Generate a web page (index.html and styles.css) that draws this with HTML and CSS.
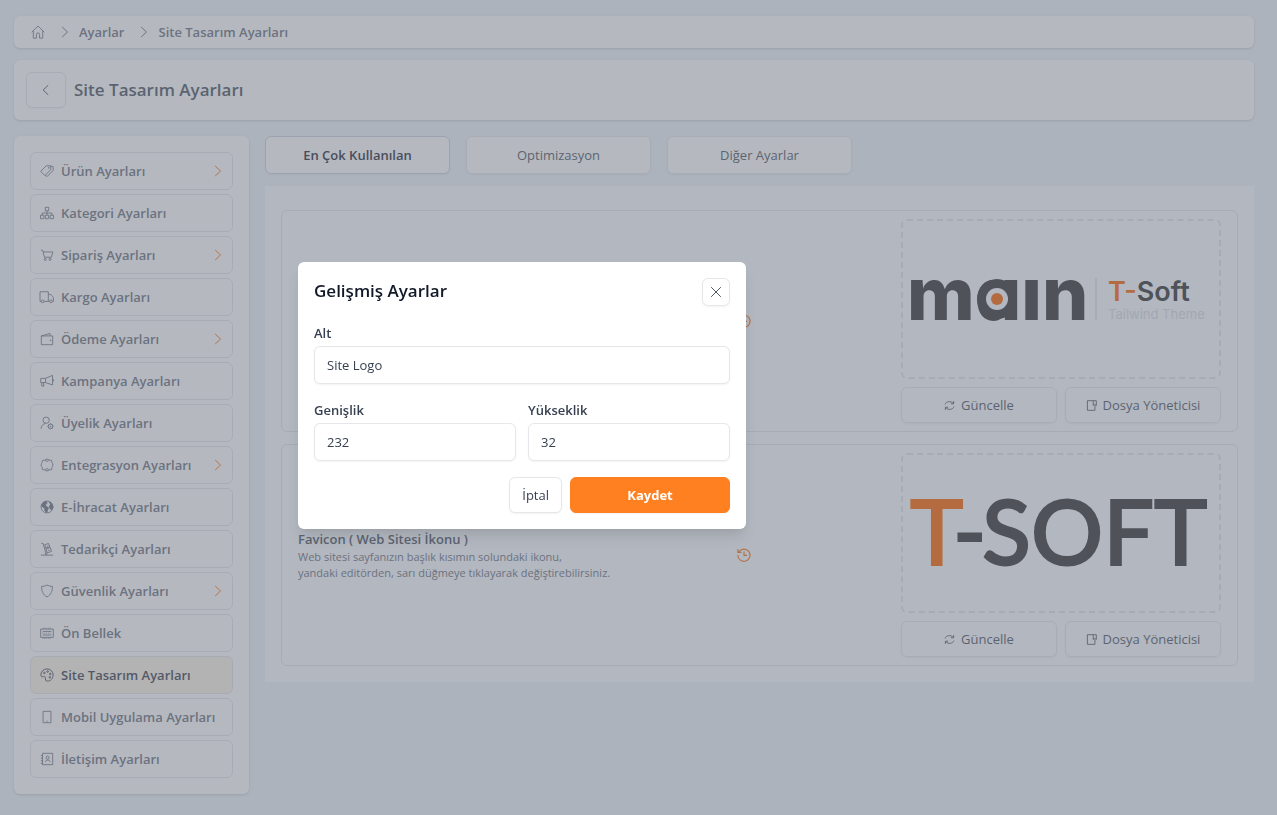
FILE: index.html
```html
<!DOCTYPE html>
<html lang="tr">
<head>
	<meta charset="utf-8">
	<meta name="viewport" content="width=device-width, initial-scale=1">
	<title>Site Tasarım Ayarları</title>
	<link rel="stylesheet" href="styles.css">
</head>
<body>

<!-- icon sprite -->
<svg class="sprite" aria-hidden="true">
	<symbol id="i-home" viewBox="0 0 16 16"><path d="M.8 8.2 8 1.2l7.2 7M2.6 6.8V15h3.6v-4.2a1.8 1.8 0 0 1 3.6 0V15h3.6V6.8"/></symbol>
	<symbol id="i-right" viewBox="0 0 10 14"><path d="M2.2 2l5.300 5-5.300 5"/></symbol>
	<symbol id="i-left" viewBox="0 0 10 14"><path d="M7.200 2.200l-5 4.800 5 4.800"/></symbol>
	<symbol id="i-close" viewBox="0 0 16 16"><path d="M2.500 2.500l11 11M13.500 2.500l-11 11"/></symbol>
	<symbol id="i-tags" viewBox="0 0 16 16"><path d="M.8 8.400 7.200 2h5v4.600L5.600 13.200zM12.200 2.400l2.800.6v4.400l-7 7-2-1.600"/><circle cx="10" cy="4.400" r=".5"/></symbol>
	<symbol id="i-tree" viewBox="0 0 16 16"><path d="M6 1.500h4v4H6zM.6 10.500h3.800v4H.6zM6.100 10.500h3.800v4H6.100zM11.600 10.500h3.800v4h-3.800zM8 5.500v5M2.500 10.500V8h11v2.500"/></symbol>
	<symbol id="i-cart" viewBox="0 0 16 16"><path d="M1 2.500h2l2 8h8l1.700-6H3.500"/><circle cx="6" cy="13" r="1.200"/><circle cx="11.500" cy="13" r="1.200"/></symbol>
	<symbol id="i-truck" viewBox="0 0 16 16"><path d="M1.500 13H0V2h9.500v11H4.600M9.500 5h2.800l3 3.500V13H14M9.500 13h1.400"/><circle cx="3" cy="13" r="1.600"/><circle cx="12.500" cy="13" r="1.600"/></symbol>
	<symbol id="i-wallet" viewBox="0 0 16 16"><path d="M1.500 4.500h13v10h-13zM1.500 4.500l10-2.800v2.800"/><circle cx="12" cy="9.500" r=".5"/></symbol>
	<symbol id="i-horn" viewBox="0 0 16 16"><path d="M.8 5h5.500l8-3.500v11L6.300 9.800H.8zM6.300 5v4.800M15.400 6v2.500M2 9.800v4h2.500l-.5-4"/></symbol>
	<symbol id="i-user" viewBox="0 0 16 16"><circle cx="7" cy="4.800" r="3.600"/><path d="M1.200 14.500c.3-3.300 2-5.200 5-6"/><circle cx="12" cy="11.800" r="2.600"/><circle cx="12" cy="11.800" r=".5"/><path d="M12 8.200v1M12 14.400v1M8.400 11.800h1M14.600 11.800h1M9.500 9.300l.7.7M13.800 13.600l.7.7M14.500 9.300l-.7.7M10.200 13.600l-.7.7"/></symbol>
	<symbol id="i-puzzle" viewBox="0 0 16 16"><path d="M5.500 2.500H3.500a1 1 0 0 0-1 1v2C.8 5.800.8 10.200 2.500 10.500v2a1 1 0 0 0 1 1h2c.3 1.700 4.700 1.700 5 0h2a1 1 0 0 0 1-1v-2c1.700-.3 1.700-4.700 0-5v-2a1 1 0 0 0-1-1h-2C10.200.8 5.800.8 5.500 2.500z"/><path d="M5.500 2.500l1 1h3l1-1M5.500 13.500l1-1h3l1 1"/></symbol>
	<symbol id="i-globe" viewBox="0 0 16 16"><circle cx="8" cy="8" r="6.800"/><path class="fill" d="M1.500 6 4 2.500 7.500 1.500 8 4 6 5.500l1 2 2.500 1L9 11l-1.500 3.500L5.500 12V9.500L3 8zM10.500 2l3 2 1.400 4-1.500 3-2-1-.6-3 1.200-2z"/></symbol>
	<symbol id="i-dolly" viewBox="0 0 16 16"><path d="M1.500 1.500h2l3.200 11.200M5.400 3l4.500-1.300 1.100 4-4.500 1.200zM6.800 7.700l5-1.400 1.300 4.600-5 1.400zM1 15h14M8 4.800l1.500-.4M9 9.800l2-.6"/><circle cx="7" cy="13.500" r="1"/></symbol>
	<symbol id="i-shield" viewBox="0 0 16 16"><path d="M8 1.200c2 1.100 4 1.600 6.200 1.600 0 5.400-1.500 9.400-6.200 12-4.700-2.600-6.200-6.600-6.200-12C4 2.800 6 2.300 8 1.200z"/></symbol>
	<symbol id="i-memory" viewBox="0 0 16 16"><path d="M.8 3.500h14.400v9.500H.8zM3 6.200h10M3 10.300h10"/><path d="M3 8.200h10M3 2.500h10M3 14h10" stroke-dasharray="1 1"/></symbol>
	<symbol id="i-palette" viewBox="0 0 16 16"><path d="M8 1a7 7 0 0 1 7 7c0 3.800-2.800 7-6.500 7-2.600 0-2.300-2.300-2.200-3.500.1-1.500-.9-2-2.200-1.600C2.300 10.500 1 9.900 1 8a7 7 0 0 1 7-7z"/><circle cx="5" cy="5.600" r=".9"/><circle cx="8.700" cy="4" r=".9"/><circle cx="11.700" cy="6.800" r=".9"/><circle cx="11.200" cy="10.600" r=".9"/></symbol>
	<symbol id="i-mobile" viewBox="0 0 16 16"><path d="M3.500 1.500h9v13h-9zM7.300 12.800h1.400"/></symbol>
	<symbol id="i-contact" viewBox="0 0 16 16"><path d="M2.800 1.500h11.700v13H2.800zM1 4h2.500M1 7h2.500M1 10h2.500M1 13h2.500M6 11.500c0-3 5.500-3 5.500 0"/><circle cx="8.700" cy="6.500" r="1.700"/></symbol>
	<symbol id="i-refresh" viewBox="0 0 16 16"><path d="M1.500 6.500C3 1.800 10 .8 13.500 5M14.500 9.500C13 14.200 6 15.200 2.500 11M14 1.500v4h-4M2 14.500v-4h4"/></symbol>
	<symbol id="i-file" viewBox="0 0 16 16"><path d="M10.500 1H2v14h11V8M10.500 1H15v7l-2.200-1.600L10.500 8z"/></symbol>
	<symbol id="i-history" viewBox="0 0 16 16"><path d="M2 4.600A7 7 0 1 1 1 8M1 1v4h4M8 4v4.500h3.500"/></symbol>
</svg>

<div class="page">
	<nav class="breadcrumb card" aria-label="Konum">
		<a href="#" aria-label="Ana sayfa"><svg class="icon"><use href="#i-home"/></svg></a>
		<svg class="icon sep"><use href="#i-right"/></svg>
		<a href="#">Ayarlar</a>
		<svg class="icon sep"><use href="#i-right"/></svg>
		<a href="#">Site Tasarım Ayarları</a>
	</nav>

	<header class="title-bar card">
		<button class="btn back" type="button" aria-label="Geri"><svg class="icon"><use href="#i-left"/></svg></button>
		<h1>Site Tasarım Ayarları</h1>
	</header>

	<div class="columns">
		<aside class="sidebar card">
			<a href="#"><svg class="icon"><use href="#i-tags"/></svg>Ürün Ayarları<svg class="icon more"><use href="#i-right"/></svg></a>
			<a href="#"><svg class="icon"><use href="#i-tree"/></svg>Kategori Ayarları</a>
			<a href="#"><svg class="icon"><use href="#i-cart"/></svg>Sipariş Ayarları<svg class="icon more"><use href="#i-right"/></svg></a>
			<a href="#"><svg class="icon"><use href="#i-truck"/></svg>Kargo Ayarları</a>
			<a href="#"><svg class="icon"><use href="#i-wallet"/></svg>Ödeme Ayarları<svg class="icon more"><use href="#i-right"/></svg></a>
			<a href="#"><svg class="icon"><use href="#i-horn"/></svg>Kampanya Ayarları</a>
			<a href="#"><svg class="icon"><use href="#i-user"/></svg>Üyelik Ayarları</a>
			<a href="#"><svg class="icon"><use href="#i-puzzle"/></svg>Entegrasyon Ayarları<svg class="icon more"><use href="#i-right"/></svg></a>
			<a href="#"><svg class="icon"><use href="#i-globe"/></svg>E-İhracat Ayarları</a>
			<a href="#"><svg class="icon"><use href="#i-dolly"/></svg>Tedarikçi Ayarları</a>
			<a href="#"><svg class="icon"><use href="#i-shield"/></svg>Güvenlik Ayarları<svg class="icon more"><use href="#i-right"/></svg></a>
			<a href="#"><svg class="icon"><use href="#i-memory"/></svg>Ön Bellek</a>
			<a href="#" class="active"><svg class="icon"><use href="#i-palette"/></svg>Site Tasarım Ayarları</a>
			<a href="#"><svg class="icon"><use href="#i-mobile"/></svg>Mobil Uygulama Ayarları</a>
			<a href="#"><svg class="icon"><use href="#i-contact"/></svg>İletişim Ayarları</a>
		</aside>

		<main>
			<div class="tabs">
				<button class="btn active" type="button">En Çok Kullanılan</button>
				<button class="btn" type="button">Optimizasyon</button>
				<button class="btn" type="button">Diğer Ayarlar</button>
			</div>

			<div class="panel">
				<section class="setting">
					<div class="info"></div>
					<button class="history" type="button" aria-label="Geçmiş"><svg class="icon"><use href="#i-history"/></svg></button>
					<div class="media">
						<div class="preview">
							<svg class="logo" viewBox="0 0 300 66" role="img" aria-label="main T-Soft Tailwind Theme">
								<text class="logo-main" x="-4" y="54">mɑın</text>
								<circle cx="86" cy="33" r="20"/>
								<circle class="logo-hole" cx="86" cy="33" r="11"/>
								<circle class="logo-dot" cx="86" cy="33" r="6"/>
								<path class="logo-rule" d="M185 12v42"/>
								<text class="logo-name" x="197" y="35"><tspan class="accent">T-</tspan>Soft</text>
								<text class="logo-sub" x="197" y="53">Tailwind Theme</text>
							</svg>
						</div>
						<div class="actions">
							<button class="btn" type="button"><svg class="icon"><use href="#i-refresh"/></svg>Güncelle</button>
							<button class="btn" type="button"><svg class="icon"><use href="#i-file"/></svg>Dosya Yöneticisi</button>
						</div>
					</div>
				</section>

				<section class="setting">
					<div class="info">
						<h2>Favicon ( Web Sitesi İkonu )</h2>
						<p>Web sitesi sayfanızın başlık kısımın solundaki ikonu,<br>yandaki editörden, sarı düğmeye tıklayarak değiştirebilirsiniz.</p>
					</div>
					<button class="history" type="button" aria-label="Geçmiş"><svg class="icon"><use href="#i-history"/></svg></button>
					<div class="media">
						<div class="preview">
							<svg class="logo" viewBox="0 0 300 66" role="img" aria-label="T-SOFT">
								<text class="logo-soft" y="65"><tspan class="accent" x="-1">T</tspan><tspan x="42">-</tspan><tspan x="71">SOFT</tspan></text>
							</svg>
						</div>
						<div class="actions">
							<button class="btn" type="button"><svg class="icon"><use href="#i-refresh"/></svg>Güncelle</button>
							<button class="btn" type="button"><svg class="icon"><use href="#i-file"/></svg>Dosya Yöneticisi</button>
						</div>
					</div>
				</section>
			</div>
		</main>
	</div>
</div>

<div class="overlay"></div>

<form class="modal" role="dialog" aria-modal="true" aria-labelledby="modal-title">
	<div class="modal-head">
		<h2 id="modal-title">Gelişmiş Ayarlar</h2>
		<button class="btn close" type="button" aria-label="Kapat"><svg class="icon"><use href="#i-close"/></svg></button>
	</div>
	<div class="fields">
		<div class="field wide">
			<label for="alt">Alt</label>
			<input id="alt" type="text" value="Site Logo">
		</div>
		<div class="field">
			<label for="width">Genişlik</label>
			<input id="width" type="text" value="232">
		</div>
		<div class="field">
			<label for="height">Yükseklik</label>
			<input id="height" type="text" value="32">
		</div>
	</div>
	<div class="modal-foot">
		<button class="btn" type="button">İptal</button>
		<button class="btn primary" type="submit">Kaydet</button>
	</div>
</form>

</body>
</html>
```
FILE: styles.css
```css
* { box-sizing: border-box; }
body {
	margin: 0;
	background: #eef4f9;
	color: #4b5563;
	font: 13px/20px "Segoe UI", "Open Sans", "Noto Sans", sans-serif;
}
h1, h2, p { margin: 0; }
a { color: inherit; text-decoration: none; }
button, input { font: inherit; color: inherit; }

.sprite { display: none; }
.icon {
	width: 14px;
	height: 14px;
	flex: none;
	fill: none;
	stroke: currentColor;
	stroke-width: 1;
	overflow: visible;
}
symbol { overflow: visible; }
.fill { fill: currentColor; }

.page { padding: 16px 23px 21px 14px; }
.card {
	background: #fff;
	border-radius: 6px;
	box-shadow: 0 1px 3px rgba(0, 0, 0, .1), 0 1px 2px rgba(0, 0, 0, .06);
}
.btn {
	display: flex;
	align-items: center;
	justify-content: center;
	gap: 6px;
	height: 36px;
	padding: 0 12px;
	background: #fff;
	border: 1px solid #e5e7eb;
	border-radius: 6px;
	box-shadow: 0 1px 2px rgba(0, 0, 0, .05);
	cursor: pointer;
}

.breadcrumb {
	display: flex;
	align-items: center;
	height: 32px;
	padding: 0 17px;
	margin-bottom: 12px;
	color: #6b7280;
	font-weight: 600;
}
.breadcrumb a { display: flex; }
.sep { margin: 0 7px 0 13px; }

.title-bar {
	display: flex;
	align-items: center;
	gap: 8px;
	padding: 12px;
	margin-bottom: 16px;
}
.title-bar h1 { font-size: 17px; font-weight: 600; line-height: 28px; }
.back { width: 40px; }

.columns { display: flex; align-items: flex-start; gap: 16px; }
.sidebar {
	display: flex;
	flex-direction: column;
	flex: none;
	gap: 4px;
	width: 235px;
	padding: 16px;
}
.sidebar a {
	display: flex;
	align-items: center;
	gap: 7px;
	height: 38px;
	padding: 0 9px;
	border: 1px solid #e2e5ec;
	border-radius: 6px;
	color: #6b7280;
	font-weight: 600;
	white-space: nowrap;
}
.sidebar .active { background: #fdf4e8; color: #374151; }
.sidebar .more { width: 10px; margin-left: auto; color: #f97316; }

main { flex: 1; min-width: 0; }
.tabs { display: flex; gap: 16px; margin-bottom: 12px; }
.tabs .btn { width: 185px; height: 38px; }
.tabs .active { border-color: #cbd5e1; color: #1f2937; font-weight: 600; }

.panel {
	display: flex;
	flex-direction: column;
	gap: 12px;
	padding: 24px 16px 16px;
	background: #fafcff;
}
.panel .btn { background: none; }
.setting {
	display: grid;
	grid-template-columns: minmax(0, 1fr) 314px 320px;
	align-items: center;
	padding: 8px 16px;
	border: 1px solid #e2e5ec;
	border-radius: 6px;
}
.info { white-space: nowrap; }
.info h2 { font-size: 13px; font-weight: 600; line-height: 20px; }
.info p { color: #6b7280; font-size: 11px; line-height: 16px; }
.history {
	justify-self: center;
	display: flex;
	padding: 0;
	border: 0;
	background: none;
	color: #f97316;
}
.history .icon { stroke-width: 1.3; }
.preview {
	display: flex;
	align-items: center;
	height: 160px;
	padding: 0 8px;
	margin-bottom: 8px;
	border: 2px dashed #e2e5ec;
	border-radius: 6px;
}
.actions { display: grid; grid-template-columns: 1fr 1fr; gap: 8px; }
.actions .icon { width: 11px; height: 11px; stroke-width: 1.3; }

.logo { width: 100%; overflow: visible; fill: #333; }
.logo .accent, .logo-dot { fill: #ff6400; }
.logo-hole { fill: #fafcff; }
.logo-rule { stroke: #e5e7eb; stroke-width: 2; }
.logo-main { font: 800 73px Inter, sans-serif; }
.logo-name { font: 600 27px Inter, sans-serif; }
.logo-sub { font: 400 13px Inter, sans-serif; fill: #d9dce0; }
.logo-soft { font: 500 90px Lato, sans-serif; stroke: #333; stroke-width: 2; }
.logo-soft .accent { stroke: #ff6400; }

.overlay {
	position: fixed;
	inset: 0;
	background: rgba(107, 114, 128, .5);
}
.modal {
	position: fixed;
	top: 262px;
	left: 298px;
	width: 448px;
	padding: 16px;
	background: #fff;
	border-radius: 6px;
	box-shadow: 0 10px 15px -3px rgba(0, 0, 0, .1), 0 4px 6px -2px rgba(0, 0, 0, .05);
	color: #374151;
}
.modal-head {
	display: flex;
	align-items: flex-start;
	justify-content: space-between;
	margin-bottom: 17px;
}
.modal-head h2 { color: #111827; font-size: 17px; font-weight: 600; line-height: 26px; }
.close { width: 28px; height: 28px; padding: 0; }
.fields { display: grid; grid-template-columns: 1fr 1fr; gap: 16px 12px; }
.wide { grid-column: 1 / -1; }
.field label { display: block; margin-bottom: 3px; font-weight: 600; }
.field input {
	display: block;
	width: 100%;
	height: 38px;
	padding: 0 12px;
	border: 1px solid #e5e7eb;
	border-radius: 6px;
	box-shadow: 0 1px 2px rgba(0, 0, 0, .05);
}
.modal-foot { display: flex; justify-content: flex-end; gap: 8px; margin-top: 16px; }
.primary {
	width: 160px;
	background: #ff8020;
	border-color: #ff8020;
	color: #fff;
	font-weight: 700;
}
```
